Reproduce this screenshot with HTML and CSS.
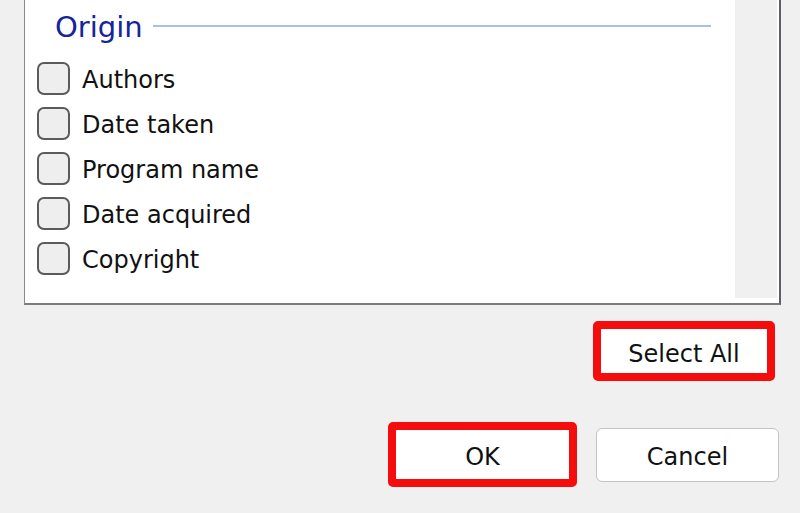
FILE: index.html
```html
<!DOCTYPE html>
<html>
<head>
<meta charset="utf-8">
<link rel="stylesheet" href="styles.css">
</head>
<body>
<div class="dialog">
  <div class="panel">
    <div class="content">
      <div class="legend">
        <span class="legend-text">Origin</span>
        <span class="legend-line"></span>
      </div>
      <div class="list">
        <label class="row"><span class="box"></span><span class="label">Authors</span></label>
        <label class="row"><span class="box"></span><span class="label">Date taken</span></label>
        <label class="row"><span class="box"></span><span class="label">Program name</span></label>
        <label class="row"><span class="box"></span><span class="label">Date acquired</span></label>
        <label class="row"><span class="box"></span><span class="label">Copyright</span></label>
      </div>
    </div>
    <div class="scrollbar"><div class="track"></div></div>
  </div>
  <div class="select-row">
    <button class="btn highlighted select-all">Select All</button>
  </div>
  <div class="action-row">
    <button class="btn highlighted ok">OK</button>
    <button class="btn cancel">Cancel</button>
  </div>
</div>
</body>
</html>
```
FILE: styles.css
```css
html, body {
  margin: 0;
  padding: 0;
  background: #f0f0f0;
}
body {
  width: 800px;
  height: 513px;
  overflow: hidden;
  font-family: "DejaVu Sans", Verdana, sans-serif;
  color: #111;
}
.dialog {
  display: flex;
  flex-direction: column;
}
.panel {
  margin-left: 24px;
  width: 754px;
  height: 303px;
  display: flex;
  background: #fff;
  border-left: 1px solid #8a8a8a;
  border-right: 2px solid #5e6068;
  border-bottom: 2px solid #7a7a80;
}
.content {
  flex: 1;
  padding: 9px 24px 0 12px;
}
.legend {
  display: flex;
  align-items: center;
  padding-left: 18px;
  height: 36px;
}
.legend-text {
  font-size: 29px;
  line-height: 34px;
  color: #15259a;
  margin-top: -1px;
}
.legend-line {
  flex: 1;
  height: 0;
  border-top: 2px solid #a9c1de;
  margin-left: 10px;
  margin-top: -2px;
}
.list {
  display: flex;
  flex-direction: column;
  gap: 12px;
  margin-top: 17px;
}
.row {
  display: flex;
  align-items: center;
  height: 33px;
}
.box {
  width: 29px;
  height: 29px;
  border: 2px solid #5b5b5b;
  border-radius: 7px;
  background: #eeeeee;
  flex: none;
}
.label {
  margin-left: 12px;
  font-size: 24px;
  line-height: 33px;
  margin-top: 3px;
}
.scrollbar {
  width: 44px;
  padding: 0 2px 5px 0;
  box-sizing: border-box;
  display: flex;
}
.track {
  flex: 1;
  background: #f0f0f0;
}
.btn {
  font-family: "DejaVu Sans", Verdana, sans-serif;
  font-size: 24px;
  color: #111;
  background: #fff;
  box-sizing: border-box;
  padding: 5px 0 0 0;
  margin: 0;
}
.highlighted {
  border: 8px solid #f50d0d;
  border-radius: 5px;
}
.select-row {
  display: flex;
  justify-content: flex-end;
  padding-right: 25px;
  margin-top: 16px;
}
.select-all {
  width: 182px;
  height: 60px;
}
.action-row {
  display: flex;
  justify-content: flex-end;
  align-items: center;
  gap: 19px;
  padding-right: 21px;
  margin-top: 41px;
}
.ok {
  width: 189px;
  height: 65px;
}
.cancel {
  width: 183px;
  height: 54px;
  border: 1px solid #c4c4c4;
  border-radius: 6px;
}
```
